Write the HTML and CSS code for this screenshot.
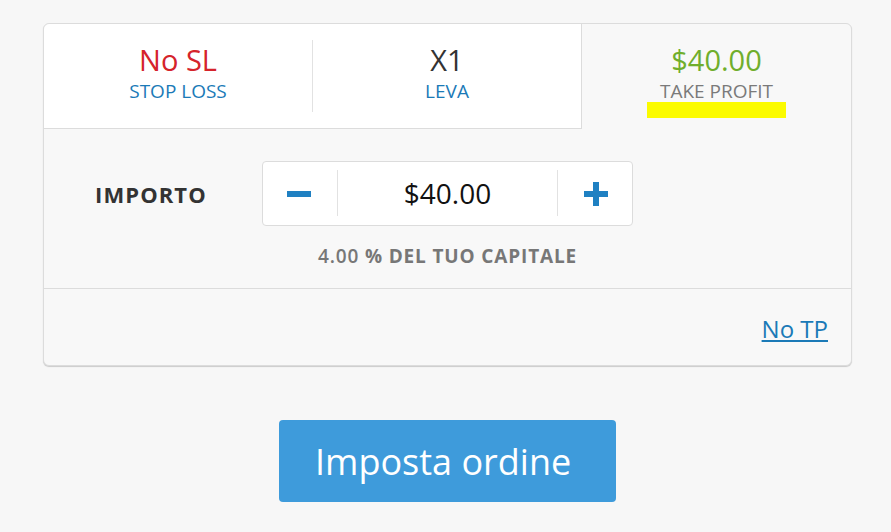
FILE: index.html
```html
<!DOCTYPE html>
<html lang="it">
<head>
    <meta charset="UTF-8">
    <title>Imposta ordine</title>
    <link rel="stylesheet" href="styles.css">
</head>
<body>
    <div class="wrap">
        <div class="order">
            <div class="tabs">
                <div class="tab">
                    <div class="tab-inner divided">
                        <div class="tab-value red">No SL</div>
                        <div class="tab-label">STOP LOSS</div>
                    </div>
                </div>
                <div class="tab edge">
                    <div class="tab-inner">
                        <div class="tab-value">X1</div>
                        <div class="tab-label">LEVA</div>
                    </div>
                </div>
                <div class="tab active">
                    <div class="tab-inner">
                        <div class="tab-value green">$40.00</div>
                        <div class="tab-label">TAKE PROFIT</div>
                        <div class="highlight"></div>
                    </div>
                </div>
            </div>

            <div class="amount">
                <div class="amount-row">
                    <div class="amount-label">IMPORTO</div>
                    <div class="stepper">
                        <button class="step"><span class="minus"></span></button>
                        <div class="step-value">$40.00</div>
                        <button class="step"><span class="plus"></span></button>
                    </div>
                </div>
                <div class="amount-note"><span class="pct">4.00</span> % DEL TUO CAPITALE</div>
            </div>

            <div class="order-footer">
                <a href="#" class="no-tp">No TP</a>
            </div>
        </div>

        <div class="actions">
            <button class="submit">Imposta ordine</button>
        </div>
    </div>
</body>
</html>
```

FILE: styles.css
```css
body {
    margin: 0;
    background: #f7f7f7;
    font-family: 'Open Sans', 'Liberation Sans', sans-serif;
    color: #333;
}
.wrap {
    width: 809px;
    margin-left: 43px;
    padding-top: 23px;
}
.order {
    background: #f8f8f8;
    border: 1px solid #dcdcdc;
    border-radius: 6px;
    box-shadow: 0 1px 1px rgba(0, 0, 0, 0.18);
}
.tabs {
    display: grid;
    grid-template-columns: 269px 269px 1fr;
}
.tab {
    height: 72px;
    padding: 16px 0;
    background: #fff;
    border-bottom: 1px solid #dcdcdc;
    text-align: center;
}
.tab:first-child {
    border-top-left-radius: 6px;
}
.tab.edge {
    border-right: 1px solid #dcdcdc;
}
.tab.active {
    background: transparent;
    border-bottom-color: transparent;
}
.tab-inner {
    height: 69px;
    padding-top: 3px;
}
.tab-inner.divided {
    border-right: 1px solid #e2e2e2;
}
.tab-value {
    font-size: 29px;
    line-height: 34px;
    color: #333;
}
.tab-value.red {
    color: #d5232b;
}
.tab-value.green {
    color: #70ae2c;
}
.tab-label {
    margin-top: 2px;
    font-size: 19px;
    line-height: 24px;
    color: #1b7ab7;
}
.active .tab-label {
    color: #7a7a7a;
}
.highlight {
    width: 139px;
    height: 16px;
    margin: -1px auto 0;
    background: #fbfb00;
}
.amount {
    padding: 32px 0 20px;
    border-bottom: 1px solid #dcdcdc;
}
.amount-row {
    display: grid;
    grid-template-columns: 1fr 371px 1fr;
    align-items: center;
}
.amount-label {
    padding-left: 51px;
    font-size: 22px;
    font-weight: 700;
    letter-spacing: 1.1px;
    color: #333;
}
.stepper {
    display: flex;
    height: 63px;
    background: #fff;
    border: 1px solid #dcdcdc;
    border-radius: 4px;
}
.step {
    width: 74px;
    border: 0;
    background: transparent;
    padding: 0;
    display: flex;
    align-items: center;
    justify-content: center;
}
.minus {
    width: 24px;
    height: 6px;
    margin-left: -2px;
    background: #1f80c2;
}
.plus {
    width: 24px;
    height: 24px;
    margin-left: 2px;
    background:
        linear-gradient(#1f80c2, #1f80c2) center / 24px 6px no-repeat,
        linear-gradient(#1f80c2, #1f80c2) center / 6px 24px no-repeat;
}
.step-value {
    flex: 1;
    margin: 8px 0 9px;
    border-left: 1px solid #e2e2e2;
    border-right: 1px solid #e2e2e2;
    display: flex;
    align-items: center;
    justify-content: center;
    font-size: 28px;
    color: #111;
}
.amount-note {
    margin-top: 18px;
    text-align: center;
    font-size: 19px;
    line-height: 24px;
    font-weight: 700;
    letter-spacing: 0.85px;
    color: #777;
}
.pct {
    font-weight: 600;
}
.order-footer {
    padding: 24px 23px 21px;
    text-align: right;
}
.no-tp {
    font-size: 24px;
    line-height: 31px;
    color: #1b7ab7;
    text-decoration: underline;
}
.actions {
    display: flex;
    justify-content: center;
    margin-top: 54px;
}
.submit {
    width: 337px;
    height: 82px;
    padding: 0 0 0 36px;
    border: 0;
    border-radius: 4px;
    background: #3e9bdb;
    color: #fff;
    font-family: 'Open Sans', 'Liberation Sans', sans-serif;
    font-size: 36px;
    text-align: left;
    white-space: nowrap;
}
```
